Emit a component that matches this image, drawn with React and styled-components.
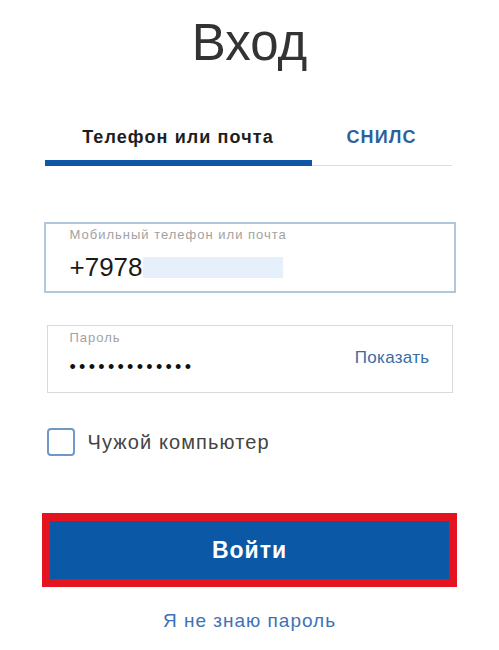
import React from "react";
import styled, { createGlobalStyle } from "styled-components";

const GlobalStyle = createGlobalStyle`
    body {
        margin: 0;
        background: #fff;
        font-family: "Liberation Sans", Arial, sans-serif;
    }
`;

const Page = styled.div`
    width: 412px;
    margin: 0 auto;
`;

const Title = styled.h1`
    margin: 0;
    padding-top: 17px;
    font-size: 51px;
    line-height: 51px;
    font-weight: normal;
    color: #333;
    text-align: center;
`;

const Tabs = styled.div`
    display: flex;
    margin: 59px 4px 0 1px;
    border-bottom: 1px solid #dedede;
`;

const Tab = styled.div`
    width: ${(props) => props.width}px;
    padding-bottom: 13px;
    margin-bottom: -1px;
    border-bottom: 6px solid ${(props) => (props.active ? "#0d57a6" : "transparent")};
    font-size: 18px;
    line-height: 20px;
    letter-spacing: 1.1px;
    font-weight: bold;
    text-align: center;
    color: ${(props) => (props.active ? "#1e1e1e" : "#2c5f9e")};
`;

const Field = styled.div`
    box-sizing: border-box;
    height: ${(props) => props.height}px;
    margin: ${(props) => props.margin};
    border: ${(props) => (props.focused ? "2px solid #b3c7dc" : "1px solid #dadada")};
    padding: ${(props) => props.padding};
    display: flex;
    align-items: flex-start;
`;

const FieldBody = styled.div`
    flex: 1;
    display: flex;
    flex-direction: column;
`;

const Label = styled.div`
    font-size: 13px;
    line-height: 14px;
    letter-spacing: 1px;
    color: #a2a2a2;
`;

const ValueRow = styled.div`
    display: flex;
    align-items: center;
    margin-top: 11px;
`;

const Value = styled.span`
    font-size: 26px;
    line-height: 28px;
    color: #1a1a1a;
`;

const Highlight = styled.span`
    width: 140px;
    height: 21px;
    background: #e6f0fb;
`;

const Dots = styled.div`
    margin-top: 12px;
    font-size: 18px;
    line-height: 20px;
    letter-spacing: 3.3px;
    color: #111;
`;

const ShowLink = styled.span`
    align-self: center;
    margin-top: -8px;
    font-size: 17px;
    letter-spacing: 0.3px;
    color: #3a6ca4;
`;

const CheckRow = styled.label`
    display: flex;
    align-items: center;
    gap: 13px;
    margin: 35px 0 0 3px;
`;

const CheckBox = styled.span`
    box-sizing: border-box;
    width: 28px;
    height: 28px;
    border: 2px solid #7098c6;
    border-radius: 4px;
`;

const CheckText = styled.span`
    font-size: 20px;
    letter-spacing: 1.1px;
    color: #444;
`;

const Button = styled.button`
    display: block;
    box-sizing: border-box;
    width: 415px;
    height: 74px;
    margin: 57px 0 0 -1.5px;
    border: 8px solid #e3141f;
    background: #0b58a6;
    color: #fff;
    font-family: "Liberation Sans", Arial, sans-serif;
    font-size: 23px;
    letter-spacing: 1px;
    font-weight: bold;
`;

const ForgotLink = styled.div`
    margin-top: 23px;
    font-size: 19px;
    line-height: 22px;
    letter-spacing: 1px;
    text-align: center;
    color: #3e72b4;
`;

const App = () => {
    return (
        <>
            <GlobalStyle />
            <Page>
                <Title>Вход</Title>

                <Tabs>
                    <Tab active width={267}>Телефон или почта</Tab>
                    <Tab width={140}>СНИЛС</Tab>
                </Tabs>

                <Field focused height={71} margin="56px 0 0" padding="4px 24px 0">
                    <FieldBody>
                        <Label>Мобильный телефон или почта</Label>
                        <ValueRow>
                            <Value>+7978</Value>
                            <Highlight />
                        </ValueRow>
                    </FieldBody>
                </Field>

                <Field height={68} margin="32px 3px 0" padding="5px 22px 0 22px">
                    <FieldBody>
                        <Label>Пароль</Label>
                        <Dots>•••••••••••••</Dots>
                    </FieldBody>
                    <ShowLink>Показать</ShowLink>
                </Field>

                <CheckRow>
                    <CheckBox />
                    <CheckText>Чужой компьютер</CheckText>
                </CheckRow>

                <Button>Войти</Button>

                <ForgotLink>Я не знаю пароль</ForgotLink>
            </Page>
        </>
    );
};

export default App;
